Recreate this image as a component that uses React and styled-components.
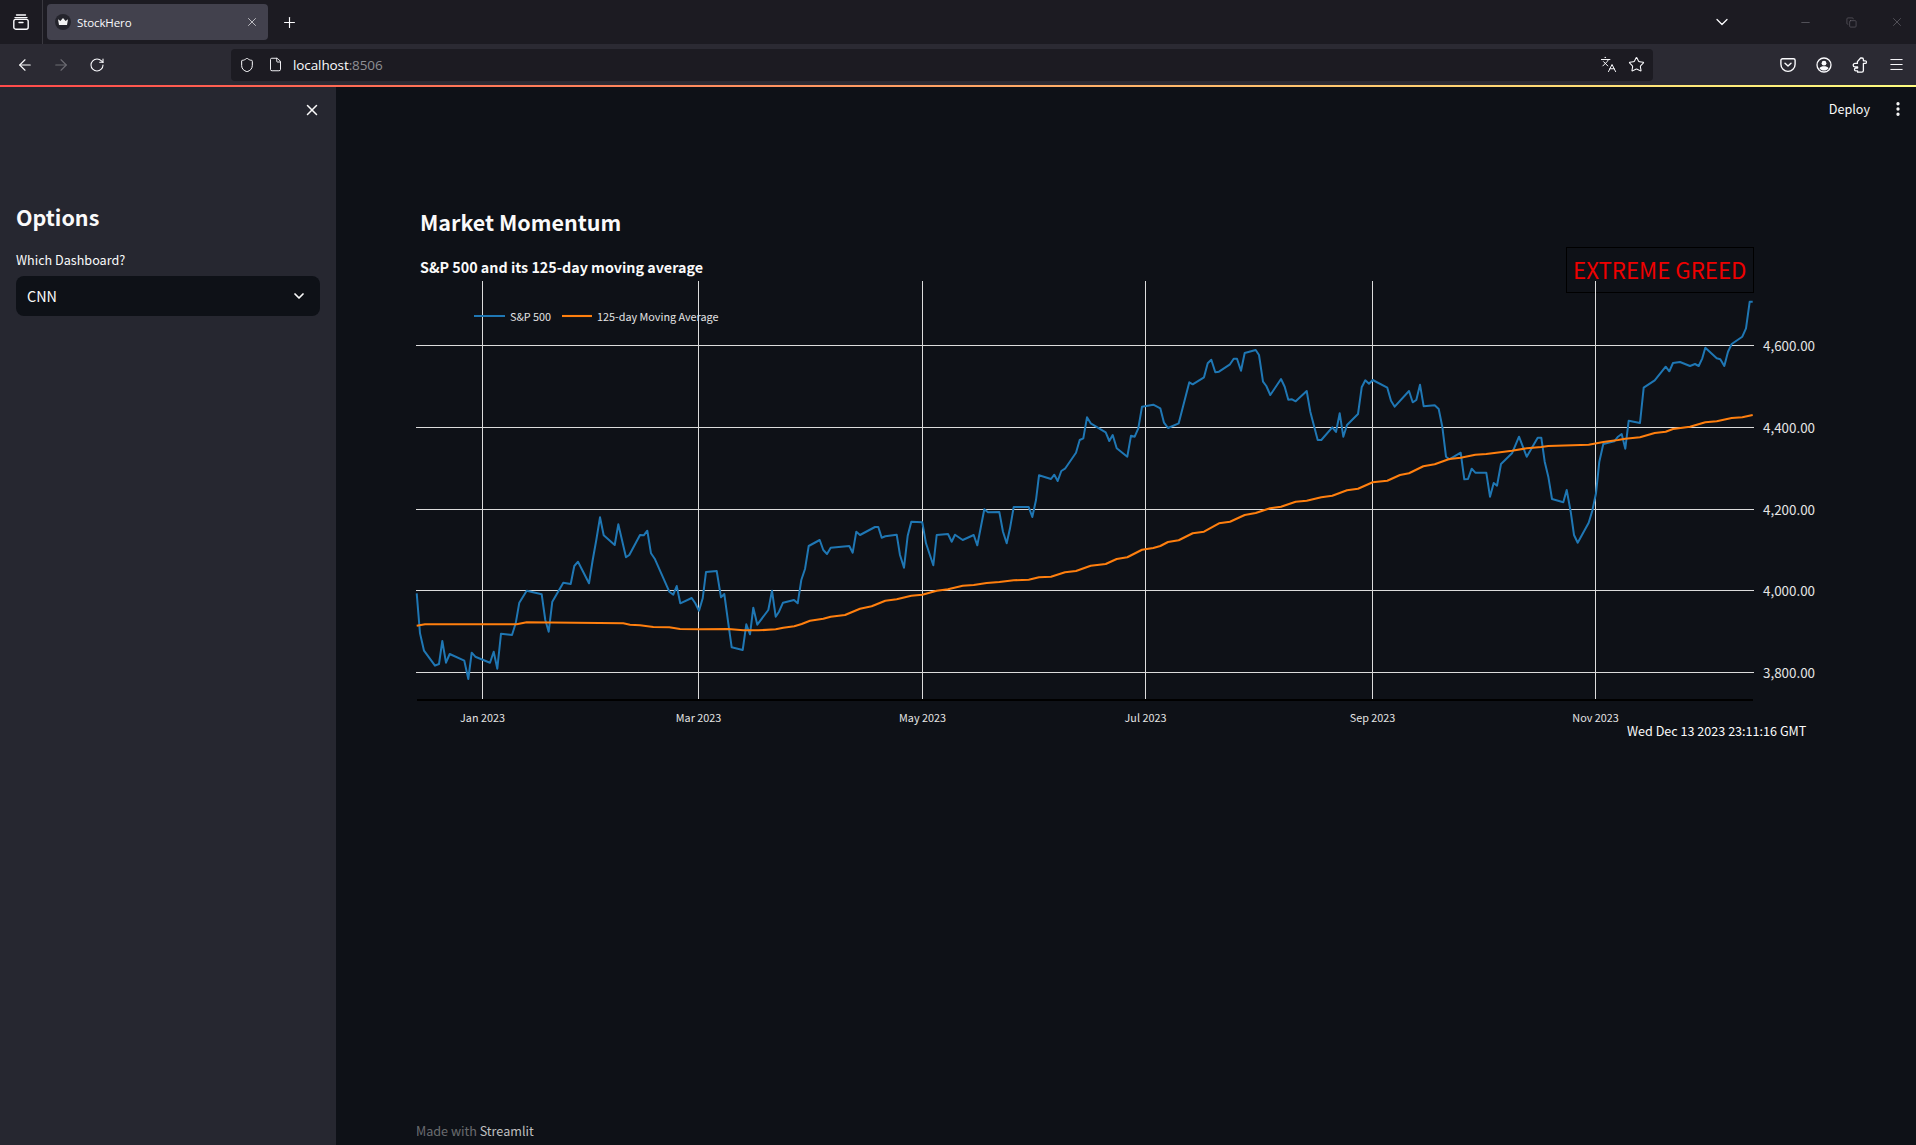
import React from 'react';
import styled, { createGlobalStyle } from 'styled-components';
import {
  X, Plus, ArrowLeft, ArrowRight, RotateCw, Shield, File, Languages, Star,
  ChevronDown, Minus, Copy, Puzzle, Menu, EllipsisVertical,
} from 'lucide-react';

const SANS = '"Noto Sans CJK SC", "Noto Sans", sans-serif';
const UI = '"Open Sans", "Noto Sans", sans-serif';

const GlobalStyle = createGlobalStyle`
  html, body { margin: 0; padding: 0; height: 100%; background: #0e1117; overflow: hidden; }
  * { box-sizing: border-box; }
`;

// points read off the reference, [x, y] in 3x crops, one list per crop
const z4 = (p) => p.map(([x, y]) => [x / 3 + 400, y / 3 + 270]);
const z5 = (p) => p.map(([x, y]) => [x / 3 + 900, y / 3 + 270]);
const z6 = (p) => p.map(([x, y]) => [x / 3 + 1400, y / 3 + 240]);

const spx = [
  ...z4([[50,970],[60,1090],[72,1142],[105,1187],[117,1182],[127,1113],[138,1178],[149,1152],[193,1172],[205,1227],[215,1148],[226,1160],[270,1178],[281,1145],[292,1196],[303,1091],[336,1095],[347,1060],[358,998],[380,962],[425,973],[436,1050],[446,1085],[457,995],[490,938],[512,942],[523,888],[534,875],[567,940],[578,870],[589,810],[600,742],[611,796],[644,825],[655,763],[678,862],[688,855],[720,795],[731,796],[742,782],[753,850],[764,866],[808,965],[820,974],[830,948],[841,1000],[875,984],[886,1000],[897,1022],[908,985],[918,906],[950,903],[963,982],[973,972],[985,1060],[995,1132],[1028,1140],[1039,1063],[1050,1093],[1060,1013],[1072,1064],[1105,1020],[1116,962],[1127,1040],[1137,1025],[1149,998],[1182,990],[1193,1000],[1204,930],[1215,897],[1226,828],[1259,810],[1270,840],[1281,852],[1292,833],[1348,828],[1358,848],[1369,785],[1380,795],[1425,771],[1435,771],[1445,803],[1456,799],[1490,794]]),
  ...z5([[0,855],[12,893],[23,797],[34,755],[67,757],[78,820],[100,886],[110,795],[144,792],[155,815],[165,794],[188,810],[221,795],[232,826],[253,718],[264,727],[298,726],[309,785],[320,820],[330,775],[341,711],[386,711],[397,741],[408,690],[417,616],[453,627],[463,614],[473,633],[484,603],[495,596],[528,548],[539,510],[550,505],[561,442],[572,460],[617,487],[628,513],[638,495],[650,535],[682,560],[693,497],[704,500],[715,475],[726,410],[760,404],[781,415],[792,458],[804,474],[836,460],[868,337],[878,343],[912,322],[923,280],[934,269],[946,307],[957,305],[990,283],[1001,266],[1011,266],[1023,302],[1034,249],[1067,240],[1077,255],[1089,335],[1099,348],[1111,375],[1143,327],[1154,350],[1165,389],[1176,388],[1187,394],[1220,363],[1231,425],[1253,510],[1264,510],[1297,472],[1308,486],[1319,430],[1330,500],[1341,465],[1374,432],[1385,352],[1396,331],[1407,341],[1418,330],[1462,353],[1473,392],[1484,410]]),
  ...z6([[27,453],[38,487],[49,480],[60,434],[71,499],[104,496],[116,507],[127,560],[138,650],[148,658],[182,638],[193,718],[204,717],[215,686],[226,698],[259,698],[270,770],[281,729],[291,737],[303,672],[336,640],[357,590],[380,650],[413,593],[424,593],[434,665],[445,710],[456,777],[490,787],[500,750],[512,815],[522,885],[533,908],[566,848],[577,812],[588,760],[598,665],[610,612],[643,604],[654,590],[665,582],[676,626],[686,542],[720,549],[731,443],[764,421],[797,380],[808,394],[819,369],[840,366],[870,378],[885,372],[896,378],[907,355],[916,323],[950,355],[961,358],[973,378],[984,335],[995,312],[1027,290],[1038,265],[1049,185],[1058,185]]),
];

const movingAvg = [
  ...z4([[50,1067],[75,1063],[350,1063],[380,1057],[670,1060],[690,1064],[720,1066],[760,1071],[808,1072],[840,1077],[900,1078],[985,1077],[1030,1081],[1075,1081],[1127,1078],[1150,1073],[1183,1069],[1205,1062],[1230,1052],[1270,1046],[1292,1040],[1335,1035],[1380,1016],[1415,1009],[1456,992],[1490,988]]),
  ...z5([[34,977],[67,974],[110,962],[144,958],[188,947],[221,945],[260,939],[298,936],[341,931],[386,929],[417,922],[453,920],[495,907],[528,903],[572,887],[617,882],[650,867],[682,862],[726,839],[760,834],[781,828],[804,816],[836,811],[878,790],[912,785],[957,760],[990,755],[1034,735],[1067,729],[1110,715],[1143,710],[1187,695],[1220,692],[1264,682],[1297,677],[1341,661],[1374,656],[1418,637],[1462,632]]),
  ...z6([[0,705],[27,700],[70,679],[104,673],[148,657],[182,653],[226,644],[259,642],[336,632],[380,625],[424,621],[445,618],[566,614],[610,606],[654,600],[676,596],[720,592],[764,579],[797,575],[819,567],[870,560],[916,547],[950,544],[995,534],[1027,532],[1058,525]]),
];

const toPoints = (p) => p.map(([x, y]) => `${x.toFixed(1)},${y.toFixed(1)}`).join(' ');

const yTicks = [
  { y: 345.5, label: '4,600.00' },
  { y: 427.5, label: '4,400.00' },
  { y: 509.5, label: '4,200.00' },
  { y: 590.5, label: '4,000.00' },
  { y: 672.5, label: '3,800.00' },
];

const xTicks = [
  { x: 482.5, label: 'Jan 2023' },
  { x: 698.5, label: 'Mar 2023' },
  { x: 922.5, label: 'May 2023' },
  { x: 1145.5, label: 'Jul 2023' },
  { x: 1372.5, label: 'Sep 2023' },
  { x: 1595.5, label: 'Nov 2023' },
];

const Page = styled.div`
  display: flex;
  flex-direction: column;
  height: 100vh;
  background: #0e1117;
`;

const TabStrip = styled.div`
  display: flex;
  align-items: center;
  height: 44px;
  background: #1c1b22;
  color: #fbfbfe;
  flex-shrink: 0;
`;

const ViewButton = styled.div`
  display: flex;
  align-items: center;
  justify-content: center;
  width: 43px;
  height: 44px;
  border-right: 1px solid #3a3940;
`;

const Tab = styled.div`
  display: flex;
  align-items: center;
  width: 221px;
  height: 36px;
  margin-left: 4px;
  padding: 0 9px 0 8px;
  background: #42414d;
  border-radius: 4px;
  font: 11.5px ${UI};
`;

const Favicon = styled.svg`
  width: 16px;
  height: 16px;
  margin-right: 6px;
  flex-shrink: 0;
`;

const TabTitle = styled.span`
  flex: 1;
  letter-spacing: -0.1px;
`;

const NewTab = styled.div`
  display: flex;
  margin-left: 13px;
`;

const StripRight = styled.div`
  display: flex;
  align-items: center;
  margin-left: auto;
  margin-right: -4px;
`;

const ListTabs = styled.div`
  display: flex;
  margin-right: 50px;
`;

const WinButton = styled.div`
  display: flex;
  justify-content: center;
  width: 46px;
  color: #6f6e75;
`;

const Toolbar = styled.div`
  display: flex;
  align-items: center;
  height: 41px;
  padding-left: 15px;
  background: #2b2a33;
  color: #fbfbfe;
  flex-shrink: 0;
`;

const NavButton = styled.div`
  display: flex;
  justify-content: center;
  width: 20px;
  margin-right: 16px;
  color: ${(p) => (p.$off ? '#6d6c73' : '#fbfbfe')};
`;

const UrlBar = styled.div`
  display: flex;
  align-items: center;
  width: 1422px;
  height: 32px;
  margin-left: 108px;
  padding: 0 8px 0 8px;
  background: #1c1b22;
  border-radius: 4px;
`;

const UrlIcon = styled.div`
  display: flex;
  margin-right: ${(p) => p.$gap || 0}px;
`;

const Url = styled.span`
  font: 13.5px ${UI};
  letter-spacing: -0.1px;
  color: #fbfbfe;
  flex: 1;
  span { color: #8f8f94; }
`;

const ToolIcons = styled.div`
  display: flex;
  align-items: center;
  margin-left: 117px;
`;

const ToolIcon = styled.div`
  display: flex;
  justify-content: center;
  width: 36px;
`;

const Decoration = styled.div`
  height: 2px;
  background: linear-gradient(90deg, rgb(255, 75, 75), rgb(255, 253, 128));
  flex-shrink: 0;
`;

const Body = styled.div`
  display: flex;
  flex: 1;
  min-height: 0;
`;

const Sidebar = styled.aside`
  display: flex;
  flex-direction: column;
  width: 336px;
  padding: 0 16px;
  background: #262730;
  color: #fafafa;
  flex-shrink: 0;
`;

const SideClose = styled.div`
  display: flex;
  justify-content: flex-end;
  padding: 14px 0 0;
  margin-right: -1px;
  height: 111px;
`;

const SideTitle = styled.h2`
  margin: 0;
  font: 700 21.5px/38px ${SANS};
`;

const FieldLabel = styled.div`
  margin-top: 14px;
  font: 12.6px/20px ${SANS};
`;

const Select = styled.div`
  display: flex;
  align-items: center;
  justify-content: space-between;
  height: 40px;
  margin-top: 6px;
  padding: 0 13px 1px 11px;
  background: #0e1117;
  border-radius: 8px;
  font: 14.4px ${SANS};
`;

const Main = styled.main`
  display: flex;
  flex: 1;
  flex-direction: column;
  min-width: 0;
  color: #fafafa;
`;

const MainHeader = styled.div`
  display: flex;
  align-items: center;
  justify-content: flex-end;
  height: 43px;
  padding-right: 9px;
  font: 12.6px ${SANS};
`;

const Kebab = styled.div`
  display: flex;
  margin-left: 19px;
`;

const Content = styled.div`
  display: flex;
  flex: 1;
  flex-direction: column;
  padding-left: 76px;
`;

const Title = styled.h2`
  margin: 72px 0 0 8px;
  font: 700 21.5px/40px ${SANS};
`;

const Chart = styled.svg`
  display: block;
  width: 1420px;
  height: 510px;
  margin-top: 3px;
  text { font-family: ${SANS}; fill: #e4e4e4; }
`;

const Footer = styled.footer`
  margin-top: auto;
  padding: 0 0 4px 4px;
  font: 12.6px/20px ${SANS};
  color: rgba(250, 250, 250, 0.4);
  span { color: rgba(250, 250, 250, 0.75); }
`;

function PocketIcon() {
  return (
    <svg width="16" height="16" viewBox="0 0 16 16" fill="none" stroke="currentColor" strokeWidth="1.4" strokeLinecap="round" strokeLinejoin="round">
      <path d="M2.5 1.7h11a1.6 1.6 0 0 1 1.6 1.6v4a7.1 7.1 0 0 1-14.2 0v-4a1.6 1.6 0 0 1 1.6-1.6z" />
      <path d="M5 6.2 8 9l3-2.8" />
    </svg>
  );
}

function AccountIcon() {
  return (
    <svg width="16" height="16" viewBox="0 0 16 16" fill="none" stroke="currentColor" strokeWidth="1.3">
      <circle cx="8" cy="8" r="7" />
      <circle cx="8" cy="6.2" r="2.4" fill="currentColor" stroke="none" />
      <path d="M3.4 11.3c1-1.4 2.6-2 4.6-2s3.600.6 4.600 2c-1.200 1.500-2.800 2.300-4.600 2.300s-3.400-.8-4.600-2.300z" fill="currentColor" stroke="none" />
    </svg>
  );
}

function PuzzleIcon() {
  return (
    <svg width="16" height="16" viewBox="0 0 16 16" fill="none" stroke="currentColor" strokeWidth="1.3" strokeLinejoin="round">
      <path d="M5.600 15.200H9.800c1 0 1.600-.6 1.600-1.600V6.400h1.800c.7 0 1.200-.5 1.200-1.200V5c0-.7-.5-1.200-1.200-1.200h-1.800V2.400c0-.8-.6-1.400-1.400-1.400H8.600L5.400 4.600v1.800H3c-1 0-1.800.8-1.800 1.800s.8 1.700 1.800 1.700h2.600v1.200H3.800c-.8 0-1.300.7-1.300 1.400 0 .8.600 1.400 1.300 1.400h1.800z" />
    </svg>
  );
}

function ViewIcon() {
  return (
    <svg width="16" height="16" viewBox="0 0 16 16" fill="none" stroke="currentColor" strokeWidth="1.4" strokeLinejoin="round">
      <path d="M3.500 1h9M2 3.600h12" strokeLinecap="round" />
      <rect x="0.800" y="5.400" width="14.400" height="9.800" rx="2" />
      <path d="M6 8.500h4" strokeLinecap="round" />
    </svg>
  );
}

function App() {
  return (
    <Page>
      <GlobalStyle />
      <TabStrip>
        <ViewButton><ViewIcon /></ViewButton>
        <Tab>
          <Favicon viewBox="0 0 16 16">
            <circle cx="8" cy="8" r="8" fill="#24242c" />
            <path d="M3 5.200 5.400 7 8 4l2.600 3L13 5.200 12 11H4z" fill="#f4f4f4" />
          </Favicon>
          <TabTitle>StockHero</TabTitle>
          <X size={14} strokeWidth={1.4} color="#d8d8dc" />
        </Tab>
        <NewTab><Plus size={17} strokeWidth={1.6} /></NewTab>
        <StripRight>
          <ListTabs><ChevronDown size={20} strokeWidth={1.5} /></ListTabs>
          <WinButton><Minus size={13} strokeWidth={1.2} /></WinButton>
          <WinButton><Copy size={11} strokeWidth={1.2} /></WinButton>
          <WinButton><X size={14} strokeWidth={1.1} /></WinButton>
        </StripRight>
      </TabStrip>
      <Toolbar>
        <NavButton><ArrowLeft size={18} strokeWidth={1.5} /></NavButton>
        <NavButton $off><ArrowRight size={18} strokeWidth={1.5} /></NavButton>
        <NavButton><RotateCw size={16} strokeWidth={1.6} /></NavButton>
        <UrlBar>
          <UrlIcon $gap={13}><Shield size={16} strokeWidth={1.5} /></UrlIcon>
          <UrlIcon $gap={10}><File size={15} strokeWidth={1.5} /></UrlIcon>
          <Url>localhost<span>:8506</span></Url>
          <UrlIcon $gap={11}><Languages size={17} strokeWidth={1.4} /></UrlIcon>
          <UrlIcon><Star size={17} strokeWidth={1.5} /></UrlIcon>
        </UrlBar>
        <ToolIcons>
          <ToolIcon><PocketIcon /></ToolIcon>
          <ToolIcon><AccountIcon /></ToolIcon>
          <ToolIcon><PuzzleIcon /></ToolIcon>
          <ToolIcon><Menu size={17} strokeWidth={1.4} /></ToolIcon>
        </ToolIcons>
      </Toolbar>
      <Decoration />
      <Body>
        <Sidebar>
          <SideClose><X size={18} strokeWidth={2} /></SideClose>
          <SideTitle>Options</SideTitle>
          <FieldLabel>Which Dashboard?</FieldLabel>
          <Select>
            CNN
            <ChevronDown size={16} strokeWidth={2.6} />
          </Select>
        </Sidebar>
        <Main>
          <MainHeader>
            Deploy
            <Kebab><EllipsisVertical size={18} strokeWidth={2.4} /></Kebab>
          </MainHeader>
          <Content>
            <Title>Market Momentum</Title>
            <Chart viewBox="412 245 1420 510">
              <text x="420" y="273" fontSize="14.3" fontWeight="700" style={{ fill: '#fafafa' }}>
                S&amp;P 500 and its 125-day moving average
              </text>
              <rect x="1566.5" y="247.5" width="187" height="45" fill="#0e1117" stroke="#000" />
              <text x="1573" y="279" fontSize="22.3" style={{ fill: '#ef0000' }}>EXTREME GREED</text>
              {yTicks.map((t) => (
                <g key={t.label}>
                  <line x1="416" x2="1754" y1={t.y} y2={t.y} stroke="#dcdcdc" />
                  <text x="1763" y={t.y + 5} fontSize="13.4">{t.label}</text>
                </g>
              ))}
              {xTicks.map((t) => (
                <g key={t.label}>
                  <line x1={t.x} x2={t.x} y1="281" y2="699" stroke="#dcdcdc" />
                  <text x={t.x} y="722" fontSize="10.8" textAnchor="middle">{t.label}</text>
                </g>
              ))}
              <line x1="417" x2="1753" y1="700" y2="700" stroke="#000" strokeWidth="2" />
              <polyline points={toPoints(spx)} fill="none" stroke="#1f77b4" strokeWidth="2" strokeLinejoin="round" />
              <polyline points={toPoints(movingAvg)} fill="none" stroke="#ff7f0e" strokeWidth="2.1" strokeLinejoin="round" />
              <line x1="474" x2="505" y1="316" y2="316" stroke="#1f77b4" strokeWidth="2" />
              <text x="510" y="321" fontSize="10.8">S&amp;P 500</text>
              <line x1="562" x2="592" y1="316" y2="316" stroke="#ff7f0e" strokeWidth="2.1" />
              <text x="597" y="321" fontSize="10.8">125-day Moving Average</text>
              <text x="1627" y="736" fontSize="12.6" style={{ fill: '#fafafa' }}>Wed Dec 13 2023 23:11:16 GMT</text>
            </Chart>
            <Footer>Made with <span>Streamlit</span></Footer>
          </Content>
        </Main>
      </Body>
    </Page>
  );
}

export default App;
